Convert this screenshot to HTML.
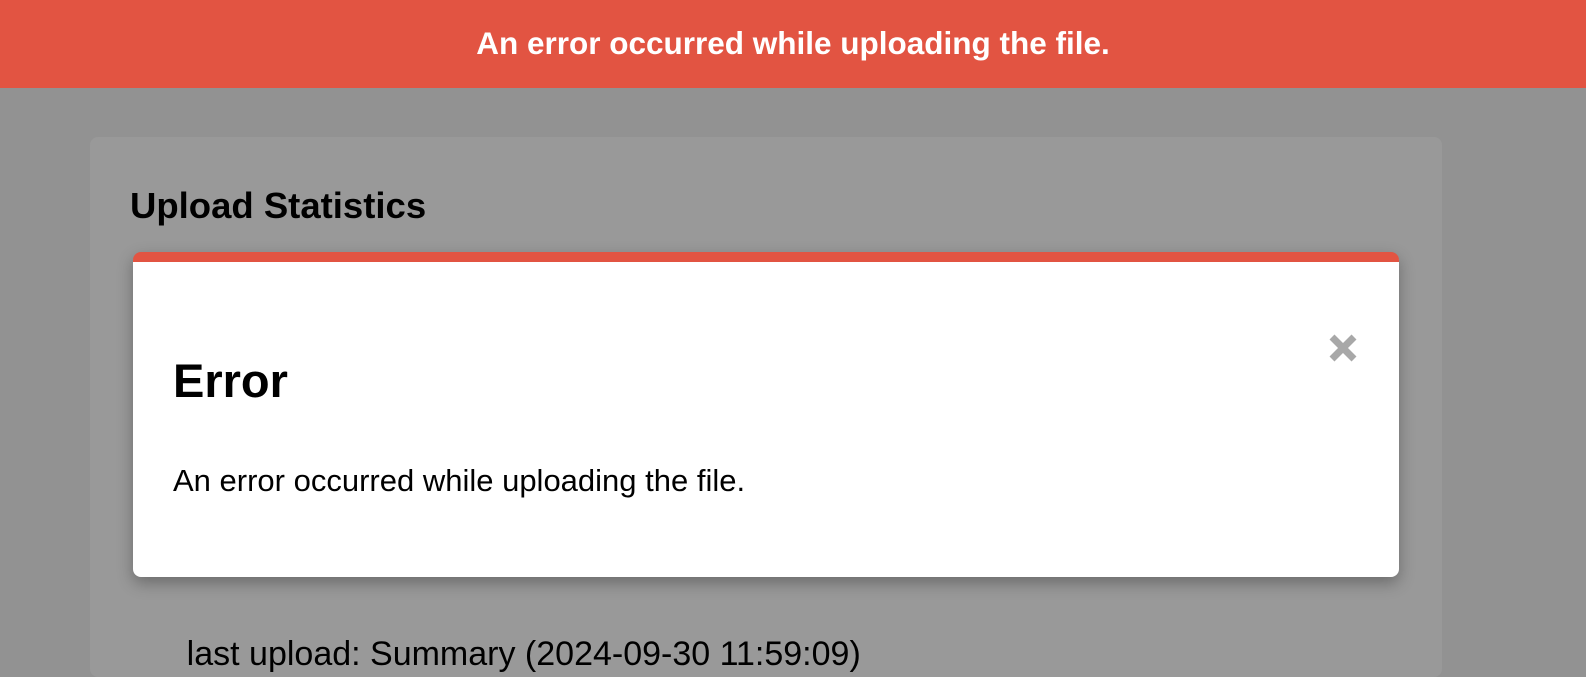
<!DOCTYPE html>
<html><head><style>
body{margin:0;width:1586px;height:640px;overflow:hidden;background:#929292;font-family:"Liberation Sans",Arial,sans-serif;position:relative}
.ban{position:absolute;left:0;top:0;width:1586px;height:88px;background:#e25442;color:#fff;font-weight:bold;font-size:31.5px;text-align:center;line-height:86px}
.card{position:absolute;left:90px;top:137px;width:1352px;height:540px;background:#999;border-radius:8px}
.card h2{position:absolute;left:40px;top:49px;margin:0;font-size:36.5px;color:#000;line-height:40px}
.bt{position:absolute;left:40px;top:498px;font-size:34px;color:#000;white-space:nowrap}
.modal{position:absolute;left:133px;top:252px;width:1266px;height:325px;background:#fff;border-radius:8px;border-top:10px solid #e25442;box-sizing:border-box;box-shadow:0 6px 16px rgba(0,0,0,.3)}
.modal h1{position:absolute;left:40px;top:92px;margin:0;font-size:47px;line-height:54px}
.modal p{position:absolute;left:40px;top:201px;margin:0;font-size:31px}
.x{position:absolute;left:1195px;top:71px}
</style></head><body>
<div class="ban">An error occurred while uploading the file.</div>
<div class="card"><h2>Upload Statistics</h2>
<div class="bt">&nbsp;&nbsp;&nbsp;&nbsp;&nbsp;&nbsp;last upload: Summary (2024-09-30 11:59:09)</div></div>
<div class="modal"><h1>Error</h1><p>An error occurred while uploading the file.</p>
<svg class="x" width="30" height="30" viewBox="0 0 30 30"><path d="M4 4L26 26M26 4L4 26" stroke="#a8a8a8" stroke-width="7"/></svg></div>
</body></html>
